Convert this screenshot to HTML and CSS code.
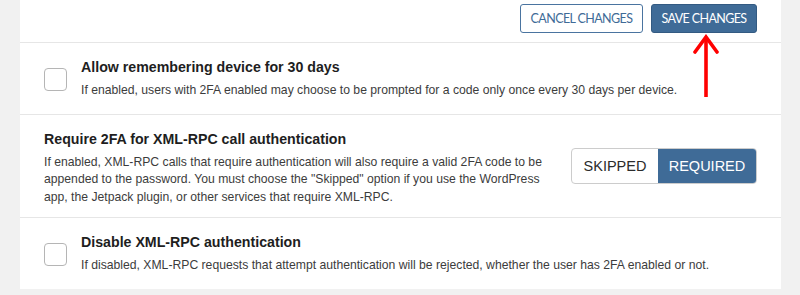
FILE: index.html
```html
<!DOCTYPE html>
<html>
<head>
<meta charset="utf-8">
<link rel="stylesheet" href="styles.css">
</head>
<body>
<div class="panel">
  <div class="actions">
    <button class="btn btn-outline">CANCEL CHANGES</button>
    <div class="save-wrap">
      <button class="btn btn-primary">SAVE CHANGES</button>
      <svg class="arrow" width="30" height="64" viewBox="0 0 30 64">
        <path d="M13 3 V63" stroke="#ff0000" stroke-width="3.6" fill="none"/>
        <path d="M2 18 L13 3 L24 18" stroke="#ff0000" stroke-width="3.6" fill="none" stroke-linecap="round" stroke-linejoin="miter"/>
      </svg>
    </div>
  </div>
  <div class="row row-check">
    <span class="checkbox"></span>
    <div class="text">
      <div class="title">Allow remembering device for 30 days</div>
      <div class="desc">If enabled, users with 2FA enabled may choose to be prompted for a code only once every 30 days per device.</div>
    </div>
  </div>
  <div class="row row-toggle">
    <div class="text">
      <div class="title">Require 2FA for XML-RPC call authentication</div>
      <div class="desc desc-wrap">If enabled, XML-RPC calls that require authentication will also require a valid 2FA code to be appended to the password. You must choose the "Skipped" option if you use the WordPress app, the Jetpack plugin, or other services that require XML-RPC.</div>
    </div>
    <div class="toggle">
      <span class="opt">SKIPPED</span>
      <span class="opt opt-on">REQUIRED</span>
    </div>
  </div>
  <div class="row row-check row-last">
    <span class="checkbox"></span>
    <div class="text">
      <div class="title">Disable XML-RPC authentication</div>
      <div class="desc">If disabled, XML-RPC requests that attempt authentication will be rejected, whether the user has 2FA enabled or not.</div>
    </div>
  </div>
</div>
</body>
</html>
```
FILE: styles.css
```css
html, body {
  margin: 0;
  padding: 0;
  background: #f1f1f1;
  font-family: "Liberation Sans", Arial, sans-serif;
}
.panel {
  margin-left: 20px;
  width: 761px;
  height: 289px;
  background: #ffffff;
}
.actions {
  display: flex;
  justify-content: flex-end;
  gap: 8px;
  padding: 4px 24px 0 0;
  border-bottom: 1px solid #e6e6e6;
  box-sizing: border-box;
  height: 43px;
}
.btn {
  font-family: Lato, "Open Sans", sans-serif;
  font-size: 12.5px;
  letter-spacing: -0.6px;
  height: 29px;
  border-radius: 3px;
  padding: 0;
  white-space: nowrap;
  cursor: pointer;
}
.btn-outline {
  background: #fff;
  border: 1px solid #4a74a0;
  color: #3f6b97;
  width: 123px;
}
.btn-primary {
  background: #3f6b97;
  border: 1px solid #335a82;
  color: #fff;
  width: 106px;
}
.save-wrap {
  position: relative;
}
.arrow {
  position: absolute;
  left: 42px;
  top: 30px;
}
.row {
  display: flex;
  border-bottom: 1px solid #e6e6e6;
  box-sizing: border-box;
}
.row-check {
  align-items: center;
  height: 72px;
  padding-left: 24px;
}
.row-check .checkbox {
  width: 21px;
  height: 21px;
  border: 1px solid #b5b5b5;
  border-radius: 4px;
  flex: none;
  margin-right: 14px;
  margin-top: 1px;
}
.row-last {
  border-bottom: none;
  height: 71px;
}
.title {
  font-weight: bold;
  font-size: 14.2px;
  color: #1e1e1e;
  line-height: 20px;
}
.desc {
  font-size: 12.2px;
  color: #3c3c3c;
  line-height: 17.5px;
  margin-top: 5px;
}
.row-toggle {
  height: 103px;
  padding: 3px 24px 0;
  align-items: center;
  justify-content: space-between;
}
.row-toggle .text {
  width: 505px;
}
.toggle {
  display: flex;
  border: 1px solid #cccccc;
  border-radius: 4px;
  overflow: hidden;
  height: 36px;
  box-sizing: border-box;
  margin-bottom: 3px;
}
.opt {
  display: flex;
  align-items: center;
  justify-content: center;
  font-size: 14.5px;
  color: #2b2b2b;
  width: 86px;
}
.opt-on {
  width: 98px;
  background: #3f6b97;
  color: #ffffff;
}
```
